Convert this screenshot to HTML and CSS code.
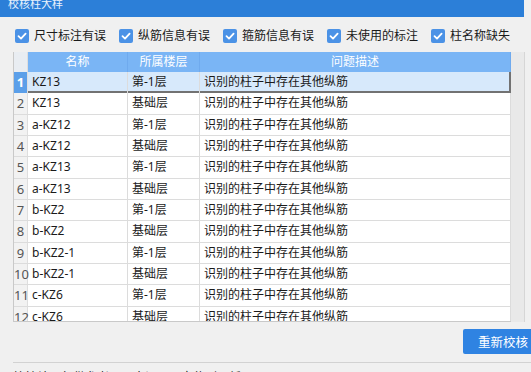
FILE: index.html
```html
<html>
<head>
    <meta charset="UTF-8">
    <title>校核柱大样</title>
    <link rel="stylesheet" href="styles.css">
</head>
<body>

    <div class="titlebar"><span class="title">校核柱大样</span></div>

    <div class="dialog-body">
        <div class="filters">
            <label class="check"><span class="box"><svg viewBox="0 0 14 14" width="14" height="14"><path d="M3.5 7.2 L6 9.6 L10.6 4.6" fill="none" stroke="#fff" stroke-width="1.8" stroke-linecap="round" stroke-linejoin="round"/></svg></span>尺寸标注有误</label>
            <label class="check"><span class="box"><svg viewBox="0 0 14 14" width="14" height="14"><path d="M3.5 7.2 L6 9.6 L10.6 4.6" fill="none" stroke="#fff" stroke-width="1.8" stroke-linecap="round" stroke-linejoin="round"/></svg></span>纵筋信息有误</label>
            <label class="check"><span class="box"><svg viewBox="0 0 14 14" width="14" height="14"><path d="M3.5 7.2 L6 9.6 L10.6 4.6" fill="none" stroke="#fff" stroke-width="1.8" stroke-linecap="round" stroke-linejoin="round"/></svg></span>箍筋信息有误</label>
            <label class="check"><span class="box"><svg viewBox="0 0 14 14" width="14" height="14"><path d="M3.5 7.2 L6 9.6 L10.6 4.6" fill="none" stroke="#fff" stroke-width="1.8" stroke-linecap="round" stroke-linejoin="round"/></svg></span>未使用的标注</label>
            <label class="check"><span class="box"><svg viewBox="0 0 14 14" width="14" height="14"><path d="M3.5 7.2 L6 9.6 L10.6 4.6" fill="none" stroke="#fff" stroke-width="1.8" stroke-linecap="round" stroke-linejoin="round"/></svg></span>柱名称缺失</label>
        </div>

        <div class="grid-wrap">
            <div class="grid">
                <div class="head">
                    <div class="num"></div>
                    <div class="cell name">名称</div>
                    <div class="cell floor">所属楼层</div>
                    <div class="cell desc">问题描述</div>
                </div>
                <div id="rows"></div>
            </div>
            <div class="vstrip"></div>
        </div>

        <div class="actions">
            <button class="recheck">重新校核</button>
        </div>

        <div class="note">校核结果仅供参考，双击记录可定位到图纸</div>
    </div>

    <script>
        let problems = [
            ["KZ13", "第-1层"], ["KZ13", "基础层"],
            ["a-KZ12", "第-1层"], ["a-KZ12", "基础层"],
            ["a-KZ13", "第-1层"], ["a-KZ13", "基础层"],
            ["b-KZ2", "第-1层"], ["b-KZ2", "基础层"],
            ["b-KZ2-1", "第-1层"], ["b-KZ2-1", "基础层"],
            ["c-KZ6", "第-1层"], ["c-KZ6", "基础层"]
        ];

        let rows = document.getElementById('rows');
        problems.forEach((p, index) => {
            let row = document.createElement('div');
            row.className = index === 0 ? 'row selected' : 'row';
            row.innerHTML = `<div class="num">${index + 1}</div>
                <div class="cells">
                    <div class="cell name">${p[0]}</div>
                    <div class="cell floor">${p[1]}</div>
                    <div class="cell desc">识别的柱子中存在其他纵筋</div>
                </div>`;
            rows.appendChild(row);
        });
    </script>

</body>
</html>
```

FILE: styles.css
```css
body {
    margin: 0;
    width: 531px;
    height: 372px;
    overflow: hidden;
    background-color: #f0f0f0;
    font-family: "Noto Sans", "Noto Sans CJK SC", sans-serif;
    font-size: 12px;
    color: #1a1a1a;
}
.titlebar {
    width: 524px;
    height: 17px;
    background-color: #2c7fd8;
    overflow: hidden;
}
.title {
    display: block;
    margin-top: -5px;
    padding-left: 8px;
    line-height: 17px;
    font-size: 11px;
    color: #eaf2fc;
}
.dialog-body {
    padding-left: 13px;
}
.filters {
    display: flex;
    align-items: center;
    gap: 13px;
    height: 14px;
    margin-top: 12px;
    margin-bottom: 9px;
    padding-left: 2px;
}
.check {
    display: flex;
    align-items: center;
    gap: 5px;
    line-height: 14px;
    white-space: nowrap;
}
.box {
    display: block;
    width: 14px;
    height: 14px;
    border-radius: 2px;
    background-color: #4b92e6;
}
.box svg {
    display: block;
}
.grid-wrap {
    display: flex;
    height: 270px;
}
.grid {
    width: 498px;
    height: 270px;
    overflow: hidden;
    border-left: 1px solid #c9c9c9;
    border-bottom: 1px solid #c9c9c9;
    box-sizing: border-box;
    background-color: #fff;
}
.vstrip {
    width: 13px;
    background-color: #e9e9e9;
    border-right: 1px solid #d6d6d6;
}
.head {
    display: flex;
    height: 20px;
    line-height: 20px;
    background-color: #7ab5f5;
    color: #fff;
}
.head .num {
    background-color: #e9edf2;
}
.head .cell {
    text-align: center;
    border-right: 1px solid #6faaee;
    padding: 0;
}
.num {
    width: 13px;
    flex: none;
    text-align: center;
    background-color: #f2f2f2;
    color: #555;
    font-size: 13px;
    border-right: 1px solid #dedede;
    white-space: nowrap;
}
.cell {
    box-sizing: border-box;
    padding-left: 4px;
    border-right: 1px solid #dcdcdc;
    white-space: nowrap;
    overflow: hidden;
}
.name {
    width: 100px;
    flex: none;
}
.floor {
    width: 72px;
    flex: none;
}
.desc {
    flex: 1;
}
.row {
    display: flex;
    height: 21.33px;
    line-height: 20px;
    box-sizing: border-box;
    border-bottom: 1px solid #dcdcdc;
}
.cells {
    display: flex;
    flex: 1;
}
.row.selected {
    border-bottom: none;
}
.row.selected .num {
    background-color: #5b9fe9;
    color: #fff;
    font-weight: bold;
}
.row.selected .cells {
    background-color: #d7e9fb;
    box-shadow: inset -2px -2px 0 #727272;
}
.row.selected .desc {
    border-right: none;
}
.actions {
    display: flex;
    justify-content: flex-end;
    height: 40px;
}
.recheck {
    margin-top: 7px;
    margin-right: -4px;
    width: 72px;
    height: 25px;
    padding: 0 0 0 15px;
    text-align: left;
    border: none;
    border-radius: 2px;
    background-color: #2f83e2;
    color: #fff;
    font-family: "Noto Sans CJK SC", sans-serif;
    font-size: 12.5px;
    white-space: nowrap;
}
.note {
    border-top: 1px solid #d2d2d2;
    padding-top: 6px;
    line-height: 18px;
    color: #111;
}
```
